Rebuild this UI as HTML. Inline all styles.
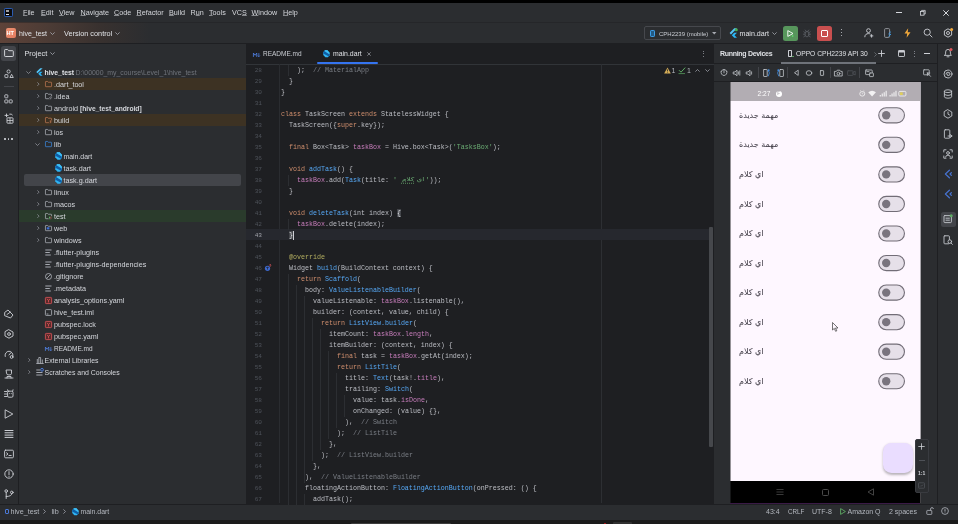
<!DOCTYPE html><html lang="en"><head><meta charset="utf-8"><title>hive_test - main.dart</title><style>
*{margin:0;padding:0;box-sizing:border-box}
html,body{width:958px;height:524px;overflow:hidden;background:#000}
body{position:relative;font-family:"Liberation Sans","DejaVu Sans",sans-serif;font-size:7px;color:#c9ccd2;line-height:1}
.a{position:absolute}
u{text-decoration-color:rgba(213,215,220,0.550);text-underline-offset:0.300px}
.t{position:absolute;white-space:nowrap;line-height:12px;height:12px}
.m{position:absolute;white-space:pre;font-family:"Liberation Mono","DejaVu Sans Mono",monospace;font-size:6.67px;line-height:11px;height:11px;color:#bcbec4}
.ln{position:absolute;font-family:"Liberation Mono",monospace;font-size:6.1px;line-height:11px;height:11px;color:#4e525a;width:16px;text-align:right;left:246px}
.k{color:#cf8e6d}.s{color:#6aab73}.f{color:#56a8f5}.p{color:#c77dbb}.c{color:#7a7e85}.an{color:#b3ae60}
svg{position:absolute;overflow:visible}
.g{position:absolute;width:1px;background:#2c2e32}
.row{position:absolute;left:19px;width:227px;height:12px}
.sw{position:absolute;width:27px;height:16px;border:1.100px solid #726d77;border-radius:8px;background:#e6e0e9}
.sw i{position:absolute;left:3.200px;top:2.800px;width:8.400px;height:8.400px;border-radius:50%;background:#79747e}
.ar{position:absolute;font-family:"DejaVu Sans","Liberation Sans",sans-serif;font-size:8px;color:#3a3640;white-space:nowrap;direction:rtl;line-height:12px;height:12px}
</style></head><body><div id="root" style="position:absolute;left:0;top:0;width:958px;height:524px;overflow:hidden;will-change:transform">
<div class="a" style="left:0;top:3px;width:958px;height:19px;background:#2b2d30"></div>
<div class="a" style="left:0;top:22px;width:958px;height:21px;background:linear-gradient(90deg,#5e4339 0,#4b3b35 50px,#38312f 100px,#2b2d30 150px)"></div>
<div class="a" style="left:0;top:43px;width:958px;height:1px;background:#1e1f22"></div>
<div class="a" style="left:0;top:22px;width:958px;height:1px;background:rgba(30,31,34,0.450)"></div>
<div class="a" style="left:0;top:44px;width:18px;height:461px;background:#2b2d30"></div>
<div class="a" style="left:18px;top:44px;width:1px;height:461px;background:#1e1f22"></div>
<div class="a" style="left:19px;top:44px;width:227px;height:461px;background:#2b2d30"></div>
<div class="a" style="left:246px;top:44px;width:468px;height:461px;background:#1e1f22"></div>
<div class="a" style="left:714px;top:44px;width:224px;height:461px;background:#2b2d30"></div>
<div class="a" style="left:937px;top:44px;width:1px;height:461px;background:#1e1f22"></div>
<div class="a" style="left:938px;top:44px;width:20px;height:461px;background:#2b2d30"></div>
<div class="a" style="left:0;top:504px;width:958px;height:16px;background:#2b2d30;border-top:1px solid #1e1f22"></div>
<div class="a" style="left:4px;top:8px;width:8.500px;height:9px;background:#0b0b0d;border:1px solid #2c5cb0;border-radius:1.200px"></div><div class="a" style="left:5.700px;top:9.800px;width:3px;height:2.500px;background:#c8c8c8;opacity:0.800"></div>
<div class="a" style="left:5.700px;top:14px;width:3px;height:1px;background:#e8e8e8"></div>
<div class="t" style="left:23px;top:7px;font-size:7.2px;color:#d5d7dc"><u>F</u>ile</div>
<div class="t" style="left:41px;top:7px;font-size:7.2px;color:#d5d7dc"><u>E</u>dit</div>
<div class="t" style="left:59px;top:7px;font-size:7.2px;color:#d5d7dc"><u>V</u>iew</div>
<div class="t" style="left:80.5px;top:7px;font-size:7.2px;color:#d5d7dc"><u>N</u>avigate</div>
<div class="t" style="left:114px;top:7px;font-size:7.2px;color:#d5d7dc"><u>C</u>ode</div>
<div class="t" style="left:136.5px;top:7px;font-size:7.2px;color:#d5d7dc"><u>R</u>efactor</div>
<div class="t" style="left:169px;top:7px;font-size:7.2px;color:#d5d7dc"><u>B</u>uild</div>
<div class="t" style="left:190.5px;top:7px;font-size:7.2px;color:#d5d7dc">R<u>u</u>n</div>
<div class="t" style="left:209px;top:7px;font-size:7.2px;color:#d5d7dc"><u>T</u>ools</div>
<div class="t" style="left:232px;top:7px;font-size:7.2px;color:#d5d7dc">VC<u>S</u></div>
<div class="t" style="left:251.5px;top:7px;font-size:7.2px;color:#d5d7dc"><u>W</u>indow</div>
<div class="t" style="left:283px;top:7px;font-size:7.2px;color:#d5d7dc"><u>H</u>elp</div>
<div class="a" style="left:896px;top:12px;width:6px;height:1px;background:#d5d7dc"></div>
<svg style="left:920px;top:9.800px" width="5.600" height="5.600" viewBox="0 0 7 7"><rect x="0.5" y="2" width="4.5" height="4.5" fill="none" stroke="#d5d7dc" stroke-width="1"/><path d="M2 2V0.5H6.5V5H5" fill="none" stroke="#d5d7dc" stroke-width="1"/></svg>
<svg style="left:943px;top:9.5px" width="6" height="6" viewBox="0 0 6 6"><path d="M0.3 0.3L5.7 5.7M5.7 0.3L0.3 5.7" stroke="#d5d7dc" stroke-width="1"/></svg>
<div class="a" style="left:5.5px;top:28px;width:10px;height:10px;border-radius:2px;background:linear-gradient(135deg,#ec9272,#e27a5e)"></div>
<div class="t" style="left:6.6px;top:27px;font-size:5.6px;font-weight:bold;color:#fff;letter-spacing:-0.2px">HT</div>
<div class="t" style="left:19px;top:27.5px;font-size:7px;color:#dfe1e5">hive_test</div>
<svg style="left:49.7px;top:31.8px" width="5" height="3" viewBox="0 0 5 3"><path d="M0.4 0.4L2.5 2.5L4.6 0.4" fill="none" stroke="#a8abb2" stroke-width="0.8"/></svg>
<div class="t" style="left:64px;top:27.5px;font-size:7.3px;color:#dfe1e5">Version control</div>
<svg style="left:114.5px;top:31.5px" width="5" height="3" viewBox="0 0 5 3"><path d="M0.4 0.4L2.5 2.5L4.6 0.4" fill="none" stroke="#a8abb2" stroke-width="0.8"/></svg>
<div class="a" style="left:644px;top:26px;width:77px;height:14px;border:1px solid #46484d;border-radius:2px"></div>
<div class="a" style="left:650px;top:29.500px;width:5px;height:7.500px;background:#235a84;border:1.100px solid #3d9ee8;border-radius:1.200px"></div>
<div class="t" style="left:659px;top:27.5px;font-size:6px;color:#c9ccd2">CPH2239 (mobile)</div>
<svg style="left:712px;top:32px" width="4.500" height="2.600" viewBox="0 0 5 3"><path d="M0 0H5L2.5 3Z" fill="#a8abb2"/></svg>
<svg style="left:728.5px;top:28px" width="9" height="10" viewBox="0 0 9 10"><path d="M5.2 0.3L0.6 5L2 6.4L8 0.3Z" fill="#54c5f8"/><path d="M5.2 4.8L2.8 7.2L5.2 9.7H8L5.5 7.2L8 4.8Z" fill="#29b6f6"/><circle cx="7.3" cy="1.7" r="1.5" fill="#4caf50"/></svg>
<div class="t" style="left:739.5px;top:27.5px;font-size:7.1px;color:#dfe1e5">main.dart</div>
<svg style="left:772px;top:31.5px" width="5" height="3" viewBox="0 0 5 3"><path d="M0.4 0.4L2.5 2.5L4.6 0.4" fill="none" stroke="#a8abb2" stroke-width="0.8"/></svg>
<div class="a" style="left:782.7px;top:25.5px;width:15px;height:15px;border-radius:2.5px;background:#57965c"></div>
<svg style="left:787.2px;top:29.5px" width="7" height="7" viewBox="0 0 7 7"><path d="M0.8 0.6L6 3.5L0.8 6.4Z" fill="none" stroke="#fff" stroke-width="0.9" stroke-linejoin="round"/><circle cx="5.6" cy="6" r="0.9" fill="#62d26f"/></svg>
<svg style="left:803.300px;top:28.500px" width="8" height="9" viewBox="0 0 8 9" fill="none" stroke="#5c5f66" stroke-width="0.800" stroke-linecap="round"><ellipse cx="4" cy="5.200" rx="2" ry="2.700"/><path d="M2.600 2.800Q4 1.200 5.400 2.800"/><path d="M2.200 1L2.900 1.900M5.800 1L5.100 1.900M0.400 5.200H2M6 5.200H7.600M0.800 2.800L2.200 3.800M7.200 2.800L5.800 3.800M0.800 7.800L2.200 6.800M7.200 7.800L5.800 6.800"/></svg>
<div class="a" style="left:817px;top:25.5px;width:15px;height:15px;border-radius:2.5px;background:#c94f4f"></div>
<div class="a" style="left:821px;top:29.5px;width:7px;height:7px;border:1px solid #fff;border-radius:1px"></div>
<div class="a" style="left:840.5px;top:29.3px;width:1.2px;height:1.2px;background:#ced0d6;border-radius:50%"></div>
<div class="a" style="left:840.5px;top:32.3px;width:1.2px;height:1.2px;background:#ced0d6;border-radius:50%"></div>
<div class="a" style="left:840.5px;top:35.3px;width:1.2px;height:1.2px;background:#ced0d6;border-radius:50%"></div>
<svg style="left:864px;top:28px" width="10" height="10" viewBox="0 0 10 10"><circle cx="4.5" cy="2.6" r="1.9" fill="none" stroke="#ced0d6" stroke-width="0.9"/><path d="M0.8 9.2C0.8 6.8 2.3 5.6 4.5 5.6C5.3 5.6 6 5.8 6.4 6.1" fill="none" stroke="#ced0d6" stroke-width="0.9"/><path d="M7.6 6.2V9.6M5.9 7.9H9.3" stroke="#ced0d6" stroke-width="0.9"/></svg>
<svg style="left:884px;top:28px" width="8" height="10" viewBox="0 0 8 10"><rect x="0.6" y="0.6" width="5" height="8.8" rx="1" fill="none" stroke="#9a9da3" stroke-width="0.9"/><path d="M4.5 6L6.8 3.8M4.5 8.4L6.8 6.2L5.6 7.2" stroke="#3d9ee8" stroke-width="1"/></svg>
<svg style="left:904px;top:28px" width="7" height="10" viewBox="0 0 7 10"><path d="M4.2 0.2L0.5 5.6H3.2L2.6 9.8L6.5 4.2H3.7Z" fill="#f2a93b"/></svg>
<svg style="left:923px;top:28px" width="10" height="10" viewBox="0 0 10 10"><circle cx="4.2" cy="4.2" r="3.1" fill="none" stroke="#ced0d6" stroke-width="0.9"/><path d="M6.5 6.5L9.3 9.3" stroke="#ced0d6" stroke-width="0.9"/></svg>
<svg style="left:943px;top:28px" width="10" height="10" viewBox="0 0 10 10"><path d="M5 0.8L8.6 2.9V7.1L5 9.2L1.4 7.100V2.9Z" fill="none" stroke="#ced0d6" stroke-width="0.9" stroke-linejoin="round"/><circle cx="5" cy="5" r="1.5" fill="none" stroke="#ced0d6" stroke-width="0.9"/><circle cx="8.6" cy="1.6" r="1.5" fill="#f2a93b"/></svg>
<div class="a" style="left:1px;top:45.500px;width:14.500px;height:15px;border-radius:2.5px;background:#43454a"></div>
<svg style="left:4px;top:49px" width="10" height="8" viewBox="0 0 10 8"><path d="M0.6 1.2Q0.6 0.5 1.3 0.5H3.6L4.8 1.7H8.6Q9.3 1.7 9.3 2.4V6.8Q9.3 7.5 8.600 7.500H1.3Q0.6 7.5 0.6 6.8Z" fill="none" stroke="#dfe1e5" stroke-width="0.9"/></svg>
<svg style="left:4px;top:69px" width="10" height="10" viewBox="0 0 10 10" fill="none" stroke="#ced0d6" stroke-width="0.85"><circle cx="4.600" cy="2.500" r="1.600"/><rect x="0.900" y="5.600" width="3" height="3" rx="0.400"/><path d="M7.600 5.300L9.300 8.500H5.900Z" stroke-linejoin="round"/></svg>
<div class="a" style="left:4px;top:86px;width:10px;height:1px;background:#43454a"></div>
<svg style="left:4px;top:94px" width="10" height="10" viewBox="0 0 10 10"><rect x="0.8" y="0.8" width="3" height="3" rx="0.500" fill="none" stroke="#ced0d6" stroke-width="0.85"/><rect x="0.8" y="5.900" width="3" height="3" rx="0.500" fill="none" stroke="#ced0d6" stroke-width="0.85"/><rect x="5.200" y="5.900" width="3" height="3" rx="0.500" fill="none" stroke="#ced0d6" stroke-width="0.85"/></svg>
<svg style="left:4px;top:113px" width="10" height="11" viewBox="0 0 10 11"><path d="M0.6 2.4H4.5M2.5 0.6V4.2M5.3 1.2Q7.5 0.6 8.6 2.2" fill="none" stroke="#ced0d6" stroke-width="0.9"/><rect x="3" y="4.8" width="6" height="5.4" rx="0.6" fill="none" stroke="#ced0d6" stroke-width="0.9"/><path d="M3 7.500H9M6 4.8V10.2" stroke="#ced0d6" stroke-width="0.8"/></svg>
<div class="a" style="left:4.2px;top:138.3px;width:1.4px;height:1.4px;border-radius:50%;background:#ced0d6"></div>
<div class="a" style="left:7.7px;top:138.3px;width:1.4px;height:1.4px;border-radius:50%;background:#ced0d6"></div>
<div class="a" style="left:11.2px;top:138.3px;width:1.4px;height:1.4px;border-radius:50%;background:#ced0d6"></div>
<svg style="left:4px;top:309px" width="10" height="10" viewBox="0 0 10 10" fill="none" stroke="#ced0d6" stroke-width="0.9" stroke-linejoin="round" stroke-linecap="round"><path d="M1 3.2L4 1L9 6L6.5 9L1 6.800Z"/><path d="M3 5.500L6.500 3"/></svg>
<svg style="left:4px;top:329px" width="10" height="10" viewBox="0 0 10 10" fill="none" stroke="#ced0d6" stroke-width="0.9" stroke-linejoin="round" stroke-linecap="round"><path d="M5 0.8L9 3V7L5 9.2L1 7V3Z"/><circle cx="5" cy="5" r="1.4"/></svg>
<svg style="left:4px;top:349px" width="10" height="10" viewBox="0 0 10 10" fill="none" stroke="#ced0d6" stroke-width="0.9" stroke-linejoin="round" stroke-linecap="round"><path d="M1.2 7.500A4 4 0 1 1 8.800 7.500"/><path d="M5 6L7 3.600"/><circle cx="7.600" cy="8" r="1.4"/></svg>
<svg style="left:4px;top:369px" width="10" height="10" viewBox="0 0 10 10" fill="none" stroke="#ced0d6" stroke-width="0.9" stroke-linejoin="round" stroke-linecap="round"><path d="M2.500 1H7.500V4.500Q7.500 6 5 6Q2.500 6 2.500 4.500Z"/><path d="M1 9H9M3 9V7.500H7V9"/></svg>
<svg style="left:4px;top:389px" width="10" height="10" viewBox="0 0 10 10" fill="none" stroke="#ced0d6" stroke-width="0.9" stroke-linejoin="round" stroke-linecap="round"><path d="M0.5 2.500H3M0.500 5H3M0.500 7.500H3"/><rect x="3.6" y="2.2" width="5.400" height="6" rx="1.200"/><path d="M4 2.200L3.600 0.800M8.600 2.200L9 0.800M5.300 4.600H5.400M7.200 4.600H7.300"/></svg>
<svg style="left:4px;top:409px" width="10" height="10" viewBox="0 0 10 10" fill="none" stroke="#ced0d6" stroke-width="0.9" stroke-linejoin="round" stroke-linecap="round"><path d="M1.500 1L8.800 5L1.500 9Z"/></svg>
<svg style="left:4px;top:429px" width="10" height="10" viewBox="0 0 10 10" fill="none" stroke="#ced0d6" stroke-width="0.9" stroke-linejoin="round" stroke-linecap="round"><path d="M1 1.500H9M1 3.800H9M1 6.100H9M1 8.400H9" stroke-width="1"/></svg>
<svg style="left:4px;top:449px" width="10" height="10" viewBox="0 0 10 10" fill="none" stroke="#ced0d6" stroke-width="0.9" stroke-linejoin="round" stroke-linecap="round"><rect x="0.600" y="1.200" width="8.800" height="7.600" rx="1"/><path d="M2.500 3.800L4 5L2.500 6.200M5 6.500H7.200"/></svg>
<svg style="left:4px;top:469px" width="10" height="10" viewBox="0 0 10 10" fill="none" stroke="#ced0d6" stroke-width="0.9" stroke-linejoin="round" stroke-linecap="round"><circle cx="5" cy="5" r="4.200"/><path d="M5 2.600V5.600M5 7.200V7.400"/></svg>
<svg style="left:4px;top:488.7px" width="10" height="10" viewBox="0 0 10 10" fill="none" stroke="#ced0d6" stroke-width="0.9" stroke-linejoin="round" stroke-linecap="round"><circle cx="2.200" cy="2" r="1.300"/><circle cx="7.800" cy="3.400" r="1.300"/><path d="M2.200 3.300V9.500M2.200 7.500Q7.800 7.500 7.800 4.700"/></svg>
<div class="t" style="left:24.5px;top:48px;font-size:7.3px;color:#dfe1e5">Project</div>
<svg style="left:49.500px;top:52px" width="5" height="3" viewBox="0 0 5 3"><path d="M0.4 0.4L2.5 2.5L4.6 0.4" fill="none" stroke="#a8abb2" stroke-width="0.8"/></svg>
<svg style="left:26px;top:70.8px" width="5" height="3" viewBox="0 0 5 3"><path d="M0.4 0.4L2.500 2.500L4.600 0.4" fill="none" stroke="#8f929a" stroke-width="0.8"/></svg>
<svg style="left:36px;top:68px" width="7" height="8" viewBox="0 0 7 8"><path d="M4.200 0.200L0.300 4.100L1.500 5.300L6.600 0.200Z" fill="#54c5f8"/><path d="M4.200 3.700L2.200 5.700L4.200 7.800H6.600L4.500 5.700L6.600 3.700Z" fill="#29b6f6"/></svg>
<div class="t" style="left:44.5px;top:66.5px;font-size:7.200px;color:#d5d7dc;font-weight:bold;font-size:6.800px;color:#dfe1e5">hive_test</div>
<div class="t" style="left:75.500px;top:66.5px;font-size:6.900px;color:#6f737a">D:\00000_my_course\Level_1\hive_test</div>
<div class="row" style="top:78px;background:#3d3223"></div>
<svg style="left:36.7px;top:81.9px" width="2.500" height="4.200" viewBox="0 0 3 5"><path d="M0.4 0.4L2.500 2.500L0.4 4.600" fill="none" stroke="#8f929a" stroke-width="0.9"/></svg>
<svg style="left:45px;top:81px" width="7" height="6.125" viewBox="0 0 8 7"><path d="M0.500 1Q0.500 0.500 1 0.500H2.800L3.700 1.400H7Q7.500 1.400 7.500 1.900V6Q7.500 6.500 7 6.500H1Q0.500 6.500 0.500 6Z" fill="none" stroke="#c77d55" stroke-width="0.8"/></svg>
<div class="t" style="left:54px;top:78.5px;font-size:7.200px;color:#d5d7dc">.dart_tool</div>
<svg style="left:36.7px;top:93.9px" width="2.500" height="4.200" viewBox="0 0 3 5"><path d="M0.4 0.4L2.500 2.500L0.4 4.600" fill="none" stroke="#8f929a" stroke-width="0.9"/></svg>
<svg style="left:45px;top:93px" width="7" height="6.125" viewBox="0 0 8 7"><path d="M0.500 1Q0.500 0.500 1 0.500H2.800L3.700 1.400H7Q7.500 1.400 7.500 1.900V6Q7.500 6.500 7 6.500H1Q0.500 6.500 0.500 6Z" fill="none" stroke="#b4b8bf" stroke-width="0.8"/><rect x="4.500" y="3.800" width="3.500" height="3.200" fill="#2b2d30"/><circle cx="6.300" cy="5.400" r="1" fill="none" stroke="#b4b8bf" stroke-width="0.600"/></svg>
<div class="t" style="left:54px;top:90.5px;font-size:7.200px;color:#d5d7dc">.idea</div>
<svg style="left:36.7px;top:105.9px" width="2.500" height="4.200" viewBox="0 0 3 5"><path d="M0.4 0.4L2.500 2.500L0.4 4.600" fill="none" stroke="#8f929a" stroke-width="0.9"/></svg>
<svg style="left:45px;top:105px" width="7" height="6.125" viewBox="0 0 8 7"><path d="M0.500 1Q0.500 0.500 1 0.500H2.800L3.700 1.400H7Q7.500 1.400 7.500 1.900V6Q7.500 6.500 7 6.500H1Q0.500 6.500 0.500 6Z" fill="none" stroke="#b4b8bf" stroke-width="0.8"/></svg>
<div class="t" style="left:54px;top:102.5px;font-size:7.200px;color:#d5d7dc">android</div>
<div class="t" style="left:80px;top:102.5px;font-size:6.700px;font-weight:bold;color:#d5d7dc">[hive_test_android]</div>
<div class="row" style="top:114px;background:#3d3223"></div>
<svg style="left:36.7px;top:117.9px" width="2.500" height="4.200" viewBox="0 0 3 5"><path d="M0.4 0.4L2.500 2.500L0.4 4.600" fill="none" stroke="#8f929a" stroke-width="0.9"/></svg>
<svg style="left:45px;top:117px" width="7" height="6.125" viewBox="0 0 8 7"><path d="M0.500 1Q0.500 0.500 1 0.500H2.800L3.700 1.400H7Q7.500 1.400 7.500 1.900V6Q7.500 6.500 7 6.500H1Q0.500 6.500 0.500 6Z" fill="none" stroke="#c77d55" stroke-width="0.8"/><rect x="4.500" y="3.800" width="3.500" height="3.200" fill="#3d3223"/><path d="M5.200 4.500H7.500M5.200 5.800H7.500M6.300 4V6.800" stroke="#c77d55" stroke-width="0.600"/></svg>
<div class="t" style="left:54px;top:114.5px;font-size:7.200px;color:#d5d7dc">build</div>
<svg style="left:36.7px;top:129.9px" width="2.500" height="4.200" viewBox="0 0 3 5"><path d="M0.4 0.4L2.500 2.500L0.4 4.600" fill="none" stroke="#8f929a" stroke-width="0.9"/></svg>
<svg style="left:45px;top:129px" width="7" height="6.125" viewBox="0 0 8 7"><path d="M0.500 1Q0.500 0.500 1 0.500H2.800L3.700 1.400H7Q7.500 1.400 7.500 1.900V6Q7.500 6.500 7 6.500H1Q0.500 6.500 0.500 6Z" fill="none" stroke="#b4b8bf" stroke-width="0.8"/></svg>
<div class="t" style="left:54px;top:126.5px;font-size:7.200px;color:#d5d7dc">ios</div>
<svg style="left:35.2px;top:142.8px" width="5" height="3" viewBox="0 0 5 3"><path d="M0.4 0.4L2.500 2.500L4.600 0.4" fill="none" stroke="#8f929a" stroke-width="0.8"/></svg>
<svg style="left:45px;top:141px" width="7" height="6.125" viewBox="0 0 8 7"><path d="M0.500 1Q0.500 0.500 1 0.500H2.800L3.700 1.400H7Q7.500 1.400 7.500 1.900V6Q7.500 6.500 7 6.500H1Q0.500 6.500 0.500 6Z" fill="none" stroke="#3d8ee8" stroke-width="0.8"/></svg>
<div class="t" style="left:54px;top:138.5px;font-size:7.200px;color:#d5d7dc">lib</div>
<svg style="left:54.7px;top:152.2px" width="7.200" height="8" viewBox="0 0 8 8" preserveAspectRatio="none"><path d="M2.300 0.300H5.200L7.700 2.800V5.800L5.800 7.700H2.800L0.300 5.200V2.300Z" fill="#2fb4f3"/><path d="M0.300 2.600L1.500 1.100L7.300 4.600L7.700 5.800L6.800 6.800L0.300 3.800Z" fill="#0f5ea6"/><path d="M2.300 0.300H5.200L7.700 2.800V4.300L1.700 0.900Z" fill="#3fc0f7"/></svg>
<div class="t" style="left:63.5px;top:150.5px;font-size:7.200px;color:#d5d7dc;font-size:6.900px">main.dart</div>
<svg style="left:54.7px;top:164.2px" width="7.200" height="8" viewBox="0 0 8 8" preserveAspectRatio="none"><path d="M2.300 0.300H5.200L7.700 2.800V5.800L5.800 7.700H2.800L0.300 5.200V2.300Z" fill="#2fb4f3"/><path d="M0.300 2.600L1.500 1.100L7.300 4.600L7.700 5.800L6.800 6.800L0.300 3.800Z" fill="#0f5ea6"/><path d="M2.300 0.300H5.200L7.700 2.800V4.300L1.700 0.900Z" fill="#3fc0f7"/></svg>
<div class="t" style="left:63.5px;top:162.5px;font-size:7.200px;color:#d5d7dc">task.dart</div>
<div class="a" style="left:24px;top:174px;width:217px;height:12px;border-radius:2px;background:#43454a"></div>
<svg style="left:54.7px;top:176.2px" width="7.200" height="8" viewBox="0 0 8 8" preserveAspectRatio="none"><path d="M2.300 0.300H5.200L7.700 2.800V5.800L5.800 7.700H2.800L0.300 5.200V2.300Z" fill="#2fb4f3"/><path d="M0.300 2.600L1.500 1.100L7.300 4.600L7.700 5.800L6.800 6.800L0.300 3.800Z" fill="#0f5ea6"/><path d="M2.300 0.300H5.200L7.700 2.800V4.300L1.700 0.900Z" fill="#3fc0f7"/></svg>
<div class="t" style="left:63.5px;top:174.5px;font-size:7.200px;color:#d5d7dc">task.g.dart</div>
<svg style="left:36.7px;top:189.9px" width="2.500" height="4.200" viewBox="0 0 3 5"><path d="M0.4 0.4L2.500 2.500L0.4 4.600" fill="none" stroke="#8f929a" stroke-width="0.9"/></svg>
<svg style="left:45px;top:189px" width="7" height="6.125" viewBox="0 0 8 7"><path d="M0.500 1Q0.500 0.500 1 0.500H2.800L3.700 1.400H7Q7.500 1.400 7.500 1.900V6Q7.500 6.500 7 6.500H1Q0.500 6.500 0.500 6Z" fill="none" stroke="#b4b8bf" stroke-width="0.8"/></svg>
<div class="t" style="left:54px;top:186.5px;font-size:7.200px;color:#d5d7dc">linux</div>
<svg style="left:36.7px;top:201.9px" width="2.500" height="4.200" viewBox="0 0 3 5"><path d="M0.4 0.4L2.500 2.500L0.4 4.600" fill="none" stroke="#8f929a" stroke-width="0.9"/></svg>
<svg style="left:45px;top:201px" width="7" height="6.125" viewBox="0 0 8 7"><path d="M0.500 1Q0.500 0.500 1 0.500H2.800L3.700 1.400H7Q7.500 1.400 7.500 1.900V6Q7.500 6.500 7 6.500H1Q0.500 6.500 0.500 6Z" fill="none" stroke="#b4b8bf" stroke-width="0.8"/></svg>
<div class="t" style="left:54px;top:198.5px;font-size:7.200px;color:#d5d7dc">macos</div>
<div class="row" style="top:210px;background:#2a3b2c"></div>
<svg style="left:36.7px;top:213.9px" width="2.500" height="4.200" viewBox="0 0 3 5"><path d="M0.4 0.4L2.500 2.500L0.4 4.600" fill="none" stroke="#8f929a" stroke-width="0.9"/></svg>
<svg style="left:45px;top:213px" width="7" height="6.125" viewBox="0 0 8 7"><path d="M0.500 1Q0.500 0.500 1 0.500H2.800L3.700 1.400H7Q7.500 1.400 7.500 1.900V6Q7.500 6.500 7 6.500H1Q0.500 6.500 0.500 6Z" fill="none" stroke="#b4b8bf" stroke-width="0.8"/><rect x="4" y="3.600" width="4" height="3.400" fill="#2a3b2c"/><path d="M4.600 3.800L6.400 5.300L4.600 6.800Z" fill="#5fad65"/><path d="M6.800 4V6.800" stroke="#e0565b" stroke-width="0.700"/></svg>
<div class="t" style="left:54px;top:210.5px;font-size:7.200px;color:#d5d7dc">test</div>
<svg style="left:36.7px;top:225.9px" width="2.500" height="4.200" viewBox="0 0 3 5"><path d="M0.4 0.4L2.500 2.500L0.4 4.600" fill="none" stroke="#8f929a" stroke-width="0.9"/></svg>
<svg style="left:45px;top:225px" width="7" height="6.125" viewBox="0 0 8 7"><path d="M0.500 1Q0.500 0.500 1 0.500H2.800L3.700 1.400H7Q7.500 1.400 7.500 1.900V6Q7.500 6.500 7 6.500H1Q0.500 6.500 0.500 6Z" fill="none" stroke="#b4b8bf" stroke-width="0.8"/><rect x="2" y="2.600" width="3" height="2.400" fill="#3d6fd6"/></svg>
<div class="t" style="left:54px;top:222.5px;font-size:7.200px;color:#d5d7dc">web</div>
<svg style="left:36.7px;top:237.9px" width="2.500" height="4.200" viewBox="0 0 3 5"><path d="M0.4 0.4L2.500 2.500L0.4 4.600" fill="none" stroke="#8f929a" stroke-width="0.9"/></svg>
<svg style="left:45px;top:237px" width="7" height="6.125" viewBox="0 0 8 7"><path d="M0.500 1Q0.500 0.500 1 0.500H2.800L3.700 1.400H7Q7.500 1.400 7.500 1.900V6Q7.500 6.500 7 6.500H1Q0.500 6.500 0.500 6Z" fill="none" stroke="#b4b8bf" stroke-width="0.8"/></svg>
<div class="t" style="left:54px;top:234.5px;font-size:7.200px;color:#d5d7dc">windows</div>
<svg style="left:45px;top:249px" width="7" height="7" viewBox="0 0 7 7"><path d="M0.300 1H6.500M0.300 3.500H4.800M0.300 6H5.800" stroke="#b4b8bf" stroke-width="0.9"/></svg>
<div class="t" style="left:54px;top:246.5px;font-size:7.200px;color:#d5d7dc">.flutter-plugins</div>
<svg style="left:45px;top:261px" width="7" height="7" viewBox="0 0 7 7"><path d="M0.300 1H6.500M0.300 3.500H4.800M0.300 6H5.800" stroke="#b4b8bf" stroke-width="0.9"/></svg>
<div class="t" style="left:54px;top:258.5px;font-size:7.200px;color:#d5d7dc">.flutter-plugins-dependencies</div>
<svg style="left:45.3px;top:273px" width="7" height="7" viewBox="0 0 7 7"><circle cx="3.500" cy="3.500" r="3" fill="none" stroke="#b4b8bf" stroke-width="0.8"/><path d="M1.400 5.600L5.600 1.400" stroke="#b4b8bf" stroke-width="0.8"/></svg>
<div class="t" style="left:54px;top:270.5px;font-size:7.200px;color:#d5d7dc">.gitignore</div>
<svg style="left:45px;top:285px" width="7" height="7" viewBox="0 0 7 7"><path d="M0.300 1H6.500M0.300 3.500H4.800M0.300 6H5.800" stroke="#b4b8bf" stroke-width="0.9"/></svg>
<div class="t" style="left:54px;top:282.5px;font-size:7.200px;color:#d5d7dc">.metadata</div>
<svg style="left:45.3px;top:297px" width="7" height="7" viewBox="0 0 7 7"><rect x="0.400" y="0.400" width="6.200" height="6.200" rx="0.800" fill="#5a2a2a" stroke="#e0565b" stroke-width="0.8"/><path d="M2 1.800L3.500 3.600L5 1.800M3.500 3.600V5.400" fill="none" stroke="#e0565b" stroke-width="0.8"/></svg>
<div class="t" style="left:54px;top:294.5px;font-size:7.200px;color:#d5d7dc">analysis_options.yaml</div>
<svg style="left:45.3px;top:309px" width="7" height="7" viewBox="0 0 7 7"><rect x="0.400" y="0.600" width="6.200" height="5.800" rx="0.800" fill="none" stroke="#b4b8bf" stroke-width="0.8"/><path d="M1.600 5H3.400" stroke="#b4b8bf" stroke-width="0.8"/></svg>
<div class="t" style="left:54px;top:306.5px;font-size:7.200px;color:#d5d7dc">hive_test.iml</div>
<svg style="left:45.3px;top:321px" width="7" height="7" viewBox="0 0 7 7"><rect x="0.400" y="0.400" width="6.200" height="6.200" rx="0.800" fill="#5a2a2a" stroke="#e0565b" stroke-width="0.8"/><path d="M2 1.800L3.500 3.600L5 1.800M3.500 3.600V5.400" fill="none" stroke="#e0565b" stroke-width="0.8"/></svg>
<div class="t" style="left:54px;top:318.5px;font-size:7.200px;color:#d5d7dc">pubspec.lock</div>
<svg style="left:45.3px;top:333px" width="7" height="7" viewBox="0 0 7 7"><rect x="0.400" y="0.400" width="6.200" height="6.200" rx="0.800" fill="#5a2a2a" stroke="#e0565b" stroke-width="0.8"/><path d="M2 1.800L3.500 3.600L5 1.800M3.500 3.600V5.400" fill="none" stroke="#e0565b" stroke-width="0.8"/></svg>
<div class="t" style="left:54px;top:330.5px;font-size:7.200px;color:#d5d7dc">pubspec.yaml</div>
<svg style="left:45px;top:345.5px" width="7.500" height="6" viewBox="0 0 9 7"><path d="M0.500 5.800V1.200L2.500 3.800L4.500 1.200V5.800" fill="none" stroke="#548af7" stroke-width="0.900"/><path d="M7 1.200V5.400M5.800 4.200L7 5.600L8.200 4.200" fill="none" stroke="#548af7" stroke-width="0.800"/></svg>
<div class="t" style="left:54px;top:342.5px;font-size:7.200px;color:#d5d7dc;font-size:6.500px">README.md</div>
<svg style="left:27.5px;top:357.9px" width="2.500" height="4.200" viewBox="0 0 3 5"><path d="M0.4 0.4L2.500 2.500L0.4 4.600" fill="none" stroke="#8f929a" stroke-width="0.9"/></svg>
<svg style="left:36px;top:357px" width="8" height="7" viewBox="0 0 8 7"><path d="M0.300 6.500H7.700M1.300 6.500V2M2.800 6.500V0.500H4.600V6.500M6.300 6.500V2.500" fill="none" stroke="#b4b8bf" stroke-width="0.8"/></svg>
<div class="t" style="left:44.5px;top:354.5px;font-size:7.200px;color:#d5d7dc;font-size:6.950px">External Libraries</div>
<svg style="left:27.5px;top:369.9px" width="2.500" height="4.200" viewBox="0 0 3 5"><path d="M0.4 0.4L2.500 2.500L0.4 4.600" fill="none" stroke="#8f929a" stroke-width="0.9"/></svg>
<svg style="left:36px;top:367.5px" width="8" height="8" viewBox="0 0 8 8"><path d="M0.300 2H4M0.300 4.500H6.500M0.300 7H6.500" stroke="#b4b8bf" stroke-width="0.9"/><circle cx="6" cy="1.800" r="1.400" fill="#2b2d30" stroke="#548af7" stroke-width="0.8"/></svg>
<div class="t" style="left:44.5px;top:366.5px;font-size:7.200px;color:#d5d7dc;font-size:6.950px">Scratches and Consoles</div>
<div class="a" style="left:246px;top:63.500px;width:468px;height:1px;background:#313438"></div>
<svg style="left:253px;top:51.500px" width="7.500" height="6" viewBox="0 0 9 7"><path d="M0.500 5.800V1.200L2.500 3.800L4.500 1.200V5.800" fill="none" stroke="#548af7" stroke-width="0.900"/><path d="M7 1.200V5.400M5.800 4.200L7 5.600L8.200 4.200" fill="none" stroke="#548af7" stroke-width="0.800"/></svg>
<div class="t" style="left:263px;top:48px;font-size:6.500px;color:#c9ccd2">README.md</div>
<svg style="left:323.300px;top:50px" width="6.800" height="7.600" viewBox="0 0 8 8" preserveAspectRatio="none"><path d="M2.300 0.300H5.200L7.700 2.800V5.800L5.800 7.700H2.800L0.300 5.200V2.300Z" fill="#2fb4f3"/><path d="M0.300 2.600L1.500 1.100L7.300 4.600L7.700 5.800L6.800 6.800L0.300 3.800Z" fill="#0f5ea6"/><path d="M2.300 0.300H5.200L7.700 2.800V4.300L1.700 0.900Z" fill="#3fc0f7"/></svg>
<div class="t" style="left:333px;top:48px;font-size:6.900px;color:#dfe1e5">main.dart</div>
<svg style="left:367px;top:51.500px" width="4" height="4" viewBox="0 0 4 4"><path d="M0.300 0.300L3.700 3.700M3.700 0.300L0.300 3.700" stroke="#9da0a8" stroke-width="0.700"/></svg>
<div class="a" style="left:316.500px;top:61.500px;width:61px;height:2px;background:#3574f0;border-radius:1px"></div>
<div class="a" style="left:703px;top:50.8px;width:1.200px;height:1.200px;background:#9da0a8;border-radius:50%"></div>
<div class="a" style="left:703px;top:53.3px;width:1.200px;height:1.200px;background:#9da0a8;border-radius:50%"></div>
<div class="a" style="left:703px;top:55.8px;width:1.200px;height:1.200px;background:#9da0a8;border-radius:50%"></div>
<div class="a" style="left:279px;top:64px;width:1px;height:439px;background:#2a2c30"></div>
<div class="a" style="left:601px;top:64px;width:1px;height:439px;background:#2d2f33"></div>
<div class="a" style="left:246px;top:229.0px;width:467px;height:11px;background:#26282e"></div>
<div class="g" style="left:288px;top:64.85px;height:11.0px"></div>
<div class="g" style="left:288px;top:174.85px;height:11.0px"></div>
<div class="g" style="left:288px;top:218.85px;height:11.0px"></div>
<div class="g" style="left:288px;top:273.85px;height:231.0px"></div>
<div class="g" style="left:296px;top:284.85px;height:220.0px"></div>
<div class="g" style="left:304px;top:295.85px;height:187.0px"></div>
<div class="g" style="left:304px;top:493.85px;height:11.0px"></div>
<div class="g" style="left:312px;top:317.85px;height:143.0px"></div>
<div class="g" style="left:320px;top:328.85px;height:121.0px"></div>
<div class="g" style="left:328px;top:350.85px;height:88.0px"></div>
<div class="g" style="left:336px;top:372.85px;height:55.0px"></div>
<div class="g" style="left:344px;top:394.85px;height:22.0px"></div>
<div class="ln" style="top:64.85px">28</div>
<div class="m" style="left:297px;top:64.85px">);<span class="c">  // MaterialApp</span></div>
<div class="ln" style="top:75.85px">29</div>
<div class="m" style="left:289px;top:75.85px">}</div>
<div class="ln" style="top:86.85px">30</div>
<div class="m" style="left:281px;top:86.85px">}</div>
<div class="ln" style="top:97.85px">31</div>
<div class="ln" style="top:108.85px">32</div>
<div class="m" style="left:281px;top:108.85px"><span class="k">class</span> TaskScreen <span class="k">extends</span> StatelessWidget {</div>
<div class="ln" style="top:119.85px">33</div>
<div class="m" style="left:289px;top:119.85px">TaskScreen({<span class="k">super</span>.key});</div>
<div class="ln" style="top:130.85px">34</div>
<div class="ln" style="top:141.85px">35</div>
<div class="m" style="left:289px;top:141.85px"><span class="k">final</span> Box&lt;Task&gt; <span class="p">taskBox</span> = Hive.box&lt;Task&gt;(<span class="s">'TasksBox'</span>);</div>
<div class="ln" style="top:152.85px">36</div>
<div class="ln" style="top:163.85px">37</div>
<div class="m" style="left:289px;top:163.85px"><span class="k">void</span> <span class="f">addTask</span>() {</div>
<div class="ln" style="top:174.85px">38</div>
<div class="m" style="left:297px;top:174.85px"><span class="p">taskBox</span>.add(<span class="f">Task</span>(title: <span class="s">' </span><span class="s" dir="rtl" style="display:inline-block;width:24.500px;line-height:0;text-align:center;font-family:'DejaVu Sans',sans-serif;font-size:7.300px;transform:scaleY(0.720);transform-origin:50% 68%">اي <span style="text-decoration:underline dotted #5d8f63 0.600px;text-underline-offset:0.300px">كلام</span></span><span class="s">'</span>));</div>
<div class="ln" style="top:185.85px">39</div>
<div class="m" style="left:289px;top:185.85px">}</div>
<div class="ln" style="top:196.85px">40</div>
<div class="ln" style="top:207.85px">41</div>
<div class="m" style="left:289px;top:207.85px"><span class="k">void</span> <span class="f">deleteTask</span>(int index) <span style="background:#43454a;color:#dfe1e5">{</span></div>
<div class="ln" style="top:218.85px">42</div>
<div class="m" style="left:297px;top:218.85px"><span class="p">taskBox</span>.delete(index);</div>
<div class="ln" style="top:229.85px;color:#a1a3ab">43</div>
<div class="m" style="left:289px;top:229.85px"><span style="background:#43454a;color:#dfe1e5">}</span></div>
<div class="ln" style="top:240.85px">44</div>
<div class="ln" style="top:251.85px">45</div>
<div class="m" style="left:289px;top:251.85px"><span class="an">@override</span></div>
<div class="ln" style="top:262.85px">46</div>
<div class="m" style="left:289px;top:262.85px">Widget <span class="f">build</span>(BuildContext context) {</div>
<div class="ln" style="top:273.85px">47</div>
<div class="m" style="left:297px;top:273.85px"><span class="k">return</span> <span class="f">Scaffold</span>(</div>
<div class="ln" style="top:284.85px">48</div>
<div class="m" style="left:305px;top:284.85px">body: <span class="f">ValueListenableBuilder</span>(</div>
<div class="ln" style="top:295.85px">49</div>
<div class="m" style="left:313px;top:295.85px">valueListenable: <span class="p">taskBox</span>.listenable(),</div>
<div class="ln" style="top:306.85px">50</div>
<div class="m" style="left:313px;top:306.85px">builder: (context, value, child) {</div>
<div class="ln" style="top:317.85px">51</div>
<div class="m" style="left:321px;top:317.85px"><span class="k">return</span> <span class="f">ListView.builder</span>(</div>
<div class="ln" style="top:328.85px">52</div>
<div class="m" style="left:329px;top:328.85px">itemCount: <span class="p">taskBox</span>.<span class="p">length</span>,</div>
<div class="ln" style="top:339.85px">53</div>
<div class="m" style="left:329px;top:339.85px">itemBuilder: (context, index) {</div>
<div class="ln" style="top:350.85px">54</div>
<div class="m" style="left:337px;top:350.85px"><span class="k">final</span> task = <span class="p">taskBox</span>.getAt(index);</div>
<div class="ln" style="top:361.85px">55</div>
<div class="m" style="left:337px;top:361.85px"><span class="k">return</span> <span class="f">ListTile</span>(</div>
<div class="ln" style="top:372.85px">56</div>
<div class="m" style="left:345px;top:372.85px">title: <span class="f">Text</span>(task!.<span class="p">title</span>),</div>
<div class="ln" style="top:383.85px">57</div>
<div class="m" style="left:345px;top:383.85px">trailing: <span class="f">Switch</span>(</div>
<div class="ln" style="top:394.85px">58</div>
<div class="m" style="left:353px;top:394.85px">value: task.<span class="p">isDone</span>,</div>
<div class="ln" style="top:405.85px">59</div>
<div class="m" style="left:353px;top:405.85px">onChanged: (value) {},</div>
<div class="ln" style="top:416.85px">60</div>
<div class="m" style="left:345px;top:416.85px">),<span class="c">  // Switch</span></div>
<div class="ln" style="top:427.85px">61</div>
<div class="m" style="left:337px;top:427.85px">);<span class="c">  // ListTile</span></div>
<div class="ln" style="top:438.85px">62</div>
<div class="m" style="left:329px;top:438.85px">},</div>
<div class="ln" style="top:449.85px">63</div>
<div class="m" style="left:321px;top:449.85px">);<span class="c">  // ListView.builder</span></div>
<div class="ln" style="top:460.85px">64</div>
<div class="m" style="left:313px;top:460.85px">},</div>
<div class="ln" style="top:471.85px">65</div>
<div class="m" style="left:305px;top:471.85px">),<span class="c">  // ValueListenableBuilder</span></div>
<div class="ln" style="top:482.85px">66</div>
<div class="m" style="left:305px;top:482.85px">floatingActionButton: <span class="f">FloatingActionButton</span>(onPressed: () {</div>
<div class="ln" style="top:493.85px">67</div>
<div class="m" style="left:313px;top:493.85px">addTask();</div>
<div class="a" style="left:401px;top:183.0px;width:12.500px;height:0;border-bottom:1px dotted #4c7551"></div>
<div class="a" style="left:293px;top:230.85px;width:1px;height:9px;background:#ced0d6"></div>
<svg style="left:264px;top:264.35px" width="8" height="8" viewBox="0 0 8 8"><circle cx="3.500" cy="4.300" r="2.600" fill="#3d68cc"/><path d="M3.500 5.600V3M2.300 4L3.500 2.800L4.700 4" stroke="#1e1f22" stroke-width="0.700" fill="none"/><path d="M6.200 0.500V2.800M5.300 1.300L6.200 0.400L7.100 1.300" stroke="#e0565b" stroke-width="0.700" fill="none"/></svg>
<svg style="left:664px;top:66.500px" width="7" height="7" viewBox="0 0 7 7"><path d="M3.500 0.400L6.800 6.400H0.200Z" fill="#d6ae58"/><path d="M3.500 2.400V4.400M3.500 5.200V5.700" stroke="#1e1f22" stroke-width="0.800"/></svg>
<div class="t" style="left:671.500px;top:64.500px;font-size:7px;color:#b4b8bf">1</div>
<svg style="left:678px;top:66.500px" width="8" height="7" viewBox="0 0 8 7"><path d="M1 3.200L3 5.200L7.200 0.600" fill="none" stroke="#5fad65" stroke-width="1"/><path d="M0.500 6.600H7" stroke="#5fad65" stroke-width="0.700"/></svg>
<div class="t" style="left:687px;top:64.500px;font-size:7px;color:#b4b8bf">1</div>
<svg style="left:694.500px;top:69px" width="5" height="3" viewBox="0 0 5 3"><path d="M0.400 2.600L2.500 0.500L4.600 2.600" fill="none" stroke="#9da0a8" stroke-width="0.800"/></svg>
<svg style="left:705px;top:69px" width="5" height="3" viewBox="0 0 5 3"><path d="M0.400 0.400L2.500 2.500L4.600 0.400" fill="none" stroke="#9da0a8" stroke-width="0.800"/></svg>
<div class="a" style="left:709px;top:227px;width:4px;height:219.500px;background:#46484c;border-radius:1px"></div>
<div class="a" style="left:714px;top:63px;width:223px;height:1px;background:#1e1f22"></div>
<div class="a" style="left:714px;top:81px;width:223px;height:1px;background:#1e1f22"></div>
<div class="t" style="left:720px;top:48px;font-size:7px;color:#dfe1e5;font-weight:bold;letter-spacing:-0.300px">Running Devices</div>
<div class="a" style="left:788px;top:50.200px;width:3.600px;height:6.400px;border:0.800px solid #ced0d6;border-radius:0.800px"></div>
<div class="a" style="left:792px;top:55.500px;width:1.800px;height:1.800px;border-radius:50%;background:#5fad65"></div>
<div class="t" style="left:796px;top:48px;font-size:6.700px;color:#dfe1e5">OPPO CPH2239 API 30</div>
<div class="a" style="left:780.500px;top:62px;width:95px;height:1.500px;background:#6f737a"></div>
<svg style="left:874px;top:51.500px" width="3" height="5" viewBox="0 0 3 5"><path d="M0.400 0.400L2.500 2.500L0.400 4.600" fill="none" stroke="#6f737a" stroke-width="0.800"/></svg>
<svg style="left:878px;top:50px" width="7" height="7" viewBox="0 0 7 7"><path d="M3.500 0.200V6.800M0.200 3.500H6.800" stroke="#ced0d6" stroke-width="0.900"/></svg>
<svg style="left:897.500px;top:50px" width="7" height="7" viewBox="0 0 7 7"><rect x="0.500" y="0.500" width="6" height="6" rx="0.600" fill="none" stroke="#ced0d6" stroke-width="0.900"/><rect x="0.500" y="0.500" width="6" height="2" fill="#ced0d6"/></svg>
<div class="a" style="left:913.500px;top:50.8px;width:1.200px;height:1.200px;background:#9da0a8;border-radius:50%"></div>
<div class="a" style="left:913.500px;top:53.3px;width:1.200px;height:1.200px;background:#9da0a8;border-radius:50%"></div>
<div class="a" style="left:913.500px;top:55.8px;width:1.200px;height:1.200px;background:#9da0a8;border-radius:50%"></div>
<div class="a" style="left:923.500px;top:53px;width:6.500px;height:1px;background:#ced0d6"></div>
<svg style="left:720.1px;top:69px" width="8" height="8" viewBox="0 0 8 8" fill="none" stroke="#c3c6cc" stroke-width="0.800" stroke-linejoin="round" stroke-linecap="round"><path d="M1.200 2.400A3 3 0 1 0 6.800 2.400M1.200 2.400A3 3 0 0 1 6.800 2.400"/><path d="M4 0.800V3.800"/></svg>
<svg style="left:732.6px;top:69px" width="8" height="8" viewBox="0 0 8 8" fill="none" stroke="#c3c6cc" stroke-width="0.800" stroke-linejoin="round" stroke-linecap="round"><path d="M0.600 3H2L4 1.200V6.800L2 5H0.600Z"/><path d="M5.400 2.800V5.200M6.800 1.800V6.200"/></svg>
<svg style="left:745.6px;top:69px" width="8" height="8" viewBox="0 0 8 8" fill="none" stroke="#c3c6cc" stroke-width="0.800" stroke-linejoin="round" stroke-linecap="round"><path d="M0.600 3H2L4 1.200V6.800L2 5H0.600Z"/><path d="M5.600 2.800V5.200"/></svg>
<div class="a" style="left:758px;top:67px;width:1px;height:11px;background:#43454a"></div>
<svg style="left:762.6px;top:69px" width="8" height="8" viewBox="0 0 8 8" fill="none" stroke="#c3c6cc" stroke-width="0.800" stroke-linejoin="round" stroke-linecap="round"><rect x="0.600" y="0.500" width="3.600" height="7" rx="0.500"/><path d="M5.400 1Q7.600 4 5.400 7M5.400 1L6.600 1.200M5.400 1L5.200 2.200" stroke="#3d8ee8"/></svg>
<svg style="left:775.6px;top:69px" width="8" height="8" viewBox="0 0 8 8" fill="none" stroke="#c3c6cc" stroke-width="0.800" stroke-linejoin="round" stroke-linecap="round"><rect x="3.800" y="0.500" width="3.600" height="7" rx="0.500"/><path d="M2.600 1Q0.400 4 2.600 7M2.600 1L1.400 1.200M2.600 1L2.800 2.200" stroke="#3d8ee8"/></svg>
<div class="a" style="left:787px;top:67px;width:1px;height:11px;background:#43454a"></div>
<svg style="left:792.6px;top:69px" width="8" height="8" viewBox="0 0 8 8" fill="none" stroke="#c3c6cc" stroke-width="0.800" stroke-linejoin="round" stroke-linecap="round"><path d="M5.200 1.600V6.400L1.800 4Z"/></svg>
<svg style="left:804.6px;top:69px" width="8" height="8" viewBox="0 0 8 8" fill="none" stroke="#c3c6cc" stroke-width="0.800" stroke-linejoin="round" stroke-linecap="round"><ellipse cx="4" cy="4" rx="2.800" ry="2.300"/></svg>
<svg style="left:818.1px;top:69px" width="8" height="8" viewBox="0 0 8 8" fill="none" stroke="#c3c6cc" stroke-width="0.800" stroke-linejoin="round" stroke-linecap="round"><rect x="2.400" y="1.600" width="3.200" height="4.800" rx="0.400"/></svg>
<div class="a" style="left:830px;top:67px;width:1px;height:11px;background:#43454a"></div>
<svg style="left:833.6px;top:69px" width="9" height="8" viewBox="0 0 9 8" fill="none" stroke="#c3c6cc" stroke-width="0.800" stroke-linejoin="round" stroke-linecap="round"><path d="M0.800 2.400H2.400L3.200 1.200H5.800L6.600 2.400H8.200V7H0.800Z"/><circle cx="4.500" cy="4.600" r="1.400"/></svg>
<svg style="left:846.6px;top:69px" width="9" height="8" viewBox="0 0 9 8" fill="none" stroke="#4e5157" stroke-width="0.800" stroke-linejoin="round" stroke-linecap="round"><rect x="0.600" y="1.800" width="5.400" height="4.600" rx="0.500"/><path d="M6 3.400L8.200 2.200V6L6 4.800"/></svg>
<div class="a" style="left:859px;top:67px;width:1px;height:11px;background:#43454a"></div>
<svg style="left:864.6px;top:69px" width="9" height="8" viewBox="0 0 9 8" fill="none" stroke="#c3c6cc" stroke-width="0.800" stroke-linejoin="round" stroke-linecap="round"><rect x="0.600" y="1" width="6.600" height="4.600" rx="0.500"/><rect x="4.600" y="4" width="3.800" height="3.600" rx="0.500" fill="#2b2d30"/><path d="M1.800 2.600H4"/></svg>
<svg style="left:923.1px;top:69px" width="9" height="8" viewBox="0 0 9 8" fill="none" stroke="#c3c6cc" stroke-width="0.800" stroke-linejoin="round" stroke-linecap="round"><rect x="0.600" y="0.800" width="5.600" height="5" rx="0.500"/><path d="M4.400 4L7.600 7.400M4.400 4V6.400M4.400 4H6.800"/></svg>
<div class="a" style="left:730px;top:82px;width:190px;height:399px;background:#fef7ff"></div>
<div class="a" style="left:730px;top:82px;width:190px;height:18.500px;background:#b2adb3"></div>
<div class="a" style="left:730px;top:480.500px;width:190px;height:22px;background:#000"></div>
<div class="a" style="left:730px;top:502.500px;width:190px;height:1px;background:#3a1a46"></div>
<div class="t" style="left:757.500px;top:87.500px;font-size:6.600px;color:#fff">2:27</div>
<div class="a" style="left:775.700px;top:90.500px;width:6px;height:6px;border-radius:50%;background:#fff"></div>
<div class="t" style="left:777.200px;top:87.700px;font-size:4.500px;font-weight:bold;color:#b2adb3">F</div>
<svg style="left:858.500px;top:90px;opacity:0.850" width="48" height="7" preserveAspectRatio="none" viewBox="0 0 44 7"><circle cx="3" cy="3.800" r="2.300" fill="none" stroke="#fff" stroke-width="0.800"/><path d="M3 2.600V3.900H4M1 1L1.800 0.400M5 1L4.200 0.400" stroke="#fff" stroke-width="0.600" fill="none"/><path d="M8.500 2.200Q12 -0.800 15.500 2.200L12 6.400Z" fill="#fff"/><path d="M19 6.400H20V5H19ZM20.800 6.400H21.800V3.600H20.800ZM22.600 6.400H23.600V2.200H22.600ZM24.400 6.400H25.400V0.800H24.400Z" fill="#fff"/><path d="M28 6.400H29V5H28ZM29.800 6.400H30.800V3.600H29.800ZM31.600 6.400H32.600V2.200H31.600ZM33.400 6.400H34.400V0.800H33.400Z" fill="#fff"/><rect x="36.500" y="1.400" width="6.500" height="4.600" rx="1" fill="none" stroke="#fff" stroke-width="0.800"/><rect x="37.500" y="2.400" width="2.600" height="2.600" fill="#e8d44d"/></svg>
<div class="a" style="left:730px;top:82px;width:1px;height:421px;background:#2b2d30;opacity:0.500"></div>
<div class="a" style="left:920px;top:82px;width:1px;height:421px;background:#fef7ff;opacity:0.600"></div>
<div class="a" style="left:920px;top:82px;width:1px;height:18.500px;background:#aaa5ab;opacity:0.600"></div>
<div class="a" style="left:920px;top:480.500px;width:1px;height:22px;background:#000;opacity:0.600"></div>
<div class="ar" style="left:739px;top:109.89999999999999px;width:46px;text-align:left">مهمة جديدة</div>
<svg style="left:877px;top:105px" width="30" height="20" viewBox="0 0 30 20"><rect x="1.750" y="2.75" width="25.700" height="15.100" rx="7.550" fill="#e6e0e9" stroke="#726d77" stroke-width="1.100"/><circle cx="9.200" cy="10.30" r="4.200" fill="#79747e"/></svg>
<div class="ar" style="left:739px;top:139.45px;width:46px;text-align:left">مهمة جديدة</div>
<svg style="left:877px;top:134px" width="30" height="20" viewBox="0 0 30 20"><rect x="1.750" y="3.30" width="25.700" height="15.100" rx="7.550" fill="#e6e0e9" stroke="#726d77" stroke-width="1.100"/><circle cx="9.200" cy="10.85" r="4.200" fill="#79747e"/></svg>
<div class="ar" style="left:739px;top:169.0px;width:31px;text-align:left">اي كلام</div>
<svg style="left:877px;top:164px" width="30" height="20" viewBox="0 0 30 20"><rect x="1.750" y="2.85" width="25.700" height="15.100" rx="7.550" fill="#e6e0e9" stroke="#726d77" stroke-width="1.100"/><circle cx="9.200" cy="10.40" r="4.200" fill="#79747e"/></svg>
<div class="ar" style="left:739px;top:198.54999999999998px;width:31px;text-align:left">اي كلام</div>
<svg style="left:877px;top:193px" width="30" height="20" viewBox="0 0 30 20"><rect x="1.750" y="3.40" width="25.700" height="15.100" rx="7.550" fill="#e6e0e9" stroke="#726d77" stroke-width="1.100"/><circle cx="9.200" cy="10.95" r="4.200" fill="#79747e"/></svg>
<div class="ar" style="left:739px;top:228.1px;width:31px;text-align:left">اي كلام</div>
<svg style="left:877px;top:223px" width="30" height="20" viewBox="0 0 30 20"><rect x="1.750" y="2.95" width="25.700" height="15.100" rx="7.550" fill="#e6e0e9" stroke="#726d77" stroke-width="1.100"/><circle cx="9.200" cy="10.50" r="4.200" fill="#79747e"/></svg>
<div class="ar" style="left:739px;top:257.65000000000003px;width:31px;text-align:left">اي كلام</div>
<svg style="left:877px;top:253px" width="30" height="20" viewBox="0 0 30 20"><rect x="1.750" y="2.50" width="25.700" height="15.100" rx="7.550" fill="#e6e0e9" stroke="#726d77" stroke-width="1.100"/><circle cx="9.200" cy="10.05" r="4.200" fill="#79747e"/></svg>
<div class="ar" style="left:739px;top:287.20000000000005px;width:31px;text-align:left">اي كلام</div>
<svg style="left:877px;top:282px" width="30" height="20" viewBox="0 0 30 20"><rect x="1.750" y="3.05" width="25.700" height="15.100" rx="7.550" fill="#e6e0e9" stroke="#726d77" stroke-width="1.100"/><circle cx="9.200" cy="10.60" r="4.200" fill="#79747e"/></svg>
<div class="ar" style="left:739px;top:316.75px;width:31px;text-align:left">اي كلام</div>
<svg style="left:877px;top:312px" width="30" height="20" viewBox="0 0 30 20"><rect x="1.750" y="2.60" width="25.700" height="15.100" rx="7.550" fill="#e6e0e9" stroke="#726d77" stroke-width="1.100"/><circle cx="9.200" cy="10.15" r="4.200" fill="#79747e"/></svg>
<div class="ar" style="left:739px;top:346.3px;width:31px;text-align:left">اي كلام</div>
<svg style="left:877px;top:341px" width="30" height="20" viewBox="0 0 30 20"><rect x="1.750" y="3.15" width="25.700" height="15.100" rx="7.550" fill="#e6e0e9" stroke="#726d77" stroke-width="1.100"/><circle cx="9.200" cy="10.70" r="4.200" fill="#79747e"/></svg>
<div class="ar" style="left:739px;top:375.85px;width:31px;text-align:left">اي كلام</div>
<svg style="left:877px;top:371px" width="30" height="20" viewBox="0 0 30 20"><rect x="1.750" y="2.70" width="25.700" height="15.100" rx="7.550" fill="#e6e0e9" stroke="#726d77" stroke-width="1.100"/><circle cx="9.200" cy="10.25" r="4.200" fill="#79747e"/></svg>
<div class="a" style="left:882.500px;top:442.500px;width:30px;height:30px;border-radius:8.500px;background:#eaddff;box-shadow:0 1.500px 2.500px rgba(0,0,0,0.280)"></div>
<div class="a" style="left:915px;top:439px;width:13.500px;height:54px;border-radius:2px;background:#2b2d30;border:1px solid #393b40"></div>
<svg style="left:918px;top:443px" width="7" height="7" viewBox="0 0 7 7"><path d="M3.500 0.300V6.700M0.300 3.500H6.700" stroke="#ced0d6" stroke-width="0.800"/></svg>
<div class="a" style="left:918.500px;top:459.500px;width:6px;height:1px;background:#4e5157"></div>
<div class="t" style="left:918px;top:467px;font-size:5px;font-weight:bold;color:#ced0d6">1:1</div>
<svg style="left:918px;top:482px" width="7" height="7" viewBox="0 0 7 7"><rect x="0.500" y="0.800" width="6" height="5.400" rx="0.600" fill="none" stroke="#4e5157" stroke-width="0.800"/><path d="M1.800 4.800L3 3.400L4 4.200L5.200 2.400" stroke="#4e5157" stroke-width="0.600" fill="none"/></svg>
<svg style="left:776.300px;top:488.300px" width="8" height="8" preserveAspectRatio="none" viewBox="0 0 9 8"><path d="M0.500 1.500H8.500M0.500 4H8.500M0.500 6.500H8.500" stroke="#4a4a4a" stroke-width="0.800"/></svg>
<div class="a" style="left:821.500px;top:488.800px;width:7px;height:7px;border:0.900px solid #4a4a4a;border-radius:1.500px"></div>
<svg style="left:866.800px;top:488.300px" width="8" height="8" viewBox="0 0 8 8"><path d="M6.500 0.800V7.200L1 4Z" fill="none" stroke="#4a4a4a" stroke-width="0.900" stroke-linejoin="round"/></svg>
<svg style="left:831.500px;top:322px" width="7" height="10" viewBox="0 0 7 10"><path d="M0.500 0.500V8L2.300 6.400L3.600 9.300L4.800 8.800L3.500 6H6Z" fill="#fef7ff" stroke="#3a3a3a" stroke-width="0.700" stroke-linejoin="round"/></svg>
<svg style="left:943px;top:48px" width="10" height="10" viewBox="0 0 10 10" fill="none" stroke="#c3c6cc" stroke-width="0.900" stroke-linejoin="round" stroke-linecap="round"><path d="M1.600 7.400H8.400L7.400 6V4Q7.400 1.400 5 1.400Q2.600 1.400 2.600 4V6Z"/><path d="M4 8.800H6"/><circle cx="8" cy="1.600" r="1.500" fill="#e0565b" stroke="none"/></svg>
<svg style="left:943px;top:68.5px" width="10" height="10" viewBox="0 0 10 10" fill="none" stroke="#c3c6cc" stroke-width="0.900" stroke-linejoin="round" stroke-linecap="round"><circle cx="5" cy="5" r="4"/><path d="M3 5Q3 3.200 5 3.200Q7 3.200 7 5Q7 6.600 5.200 6.600Q4.200 6.600 4.200 5.600Q4.200 4.800 5 4.800"/></svg>
<svg style="left:943px;top:88.5px" width="10" height="10" viewBox="0 0 10 10" fill="none" stroke="#c3c6cc" stroke-width="0.900" stroke-linejoin="round" stroke-linecap="round"><ellipse cx="5" cy="2.200" rx="3.600" ry="1.400"/><path d="M1.400 2.200V7.800Q1.400 9.200 5 9.200Q8.600 9.200 8.600 7.800V2.200M1.400 5Q1.400 6.400 5 6.400Q8.600 6.400 8.600 5"/></svg>
<svg style="left:943px;top:108.5px" width="10" height="10" viewBox="0 0 10 10" fill="none" stroke="#c3c6cc" stroke-width="0.900" stroke-linejoin="round" stroke-linecap="round"><path d="M5 0.800L8.800 3V7L5 9.200L1.200 7V3Z"/><path d="M5 3V5.200L6.600 6"/></svg>
<svg style="left:943px;top:128.5px" width="10" height="10" viewBox="0 0 10 10" fill="none" stroke="#c3c6cc" stroke-width="0.900" stroke-linejoin="round" stroke-linecap="round"><rect x="1.400" y="0.800" width="5.400" height="8.400" rx="0.800"/><path d="M5 7H9M7 5.400L9 7L7 8.600" /></svg>
<svg style="left:943px;top:148.5px" width="10" height="10" viewBox="0 0 10 10" fill="none" stroke="#c3c6cc" stroke-width="0.900" stroke-linejoin="round" stroke-linecap="round"><path d="M0.800 3V0.800H3M7 0.800H9.200V3M9.200 7V9.200H7M3 9.200H0.800V7"/><circle cx="5" cy="4" r="1.400"/><path d="M2.600 8Q2.600 6.200 5 6.200Q7.400 6.200 7.400 8"/></svg>
<svg style="left:943px;top:168.5px" width="10" height="10" viewBox="0 0 10 10" fill="none" stroke="#c3c6cc" stroke-width="0.900" stroke-linejoin="round" stroke-linecap="round"><path d="M6.400 1.200L2.400 5L6.400 8.800M8.400 3.600L7 5L8.400 6.400" stroke="#4672cf" stroke-width="1.250"/></svg>
<svg style="left:943px;top:188.5px" width="10" height="10" viewBox="0 0 10 10" fill="none" stroke="#c3c6cc" stroke-width="0.900" stroke-linejoin="round" stroke-linecap="round"><path d="M6.400 1.200L2.400 5L6.400 8.800M8.400 3.600L7 5L8.400 6.400" stroke="#4672cf" stroke-width="1.250"/></svg>
<div class="a" style="left:940.500px;top:211.500px;width:15px;height:15px;border-radius:2.500px;background:#43454a"></div>
<svg style="left:943px;top:214px" width="10" height="10" viewBox="0 0 10 10" fill="none" stroke="#c3c6cc" stroke-width="0.900" stroke-linejoin="round" stroke-linecap="round"><rect x="1" y="1.600" width="7.400" height="7" rx="0.800"/><path d="M3 4.200H6.400M3 6.200H6.400"/><circle cx="8.200" cy="1.800" r="1.500" fill="#5fad65" stroke="none"/></svg>
<svg style="left:943px;top:234.5px" width="10" height="10" viewBox="0 0 10 10" fill="none" stroke="#c3c6cc" stroke-width="0.900" stroke-linejoin="round" stroke-linecap="round"><rect x="1" y="0.800" width="5.400" height="8" rx="0.800"/><circle cx="6.800" cy="6.600" r="1.800" fill="#2b2d30"/><path d="M8 8L9.400 9.400"/></svg>
<div class="a" style="left:5px;top:509px;width:4px;height:5px;border:0.900px solid #4a78d6;border-radius:1px"></div>
<div class="t" style="left:10.500px;top:506px;font-size:7.200px;color:#b4b8bf">hive_test</div>
<svg style="left:43px;top:508.500px" width="3" height="5" viewBox="0 0 3 5"><path d="M0.400 0.400L2.500 2.500L0.400 4.600" fill="none" stroke="#9da0a8" stroke-width="0.800"/></svg>
<div class="t" style="left:51.500px;top:506px;font-size:7.200px;color:#b4b8bf">lib</div>
<svg style="left:62.500px;top:508.500px" width="3" height="5" viewBox="0 0 3 5"><path d="M0.400 0.400L2.500 2.500L0.400 4.600" fill="none" stroke="#9da0a8" stroke-width="0.800"/></svg>
<svg style="left:71.500px;top:507.500px" width="6.800" height="7.600" viewBox="0 0 8 8" preserveAspectRatio="none"><path d="M2.300 0.300H5.200L7.700 2.800V5.800L5.800 7.700H2.800L0.300 5.200V2.300Z" fill="#2fb4f3"/><path d="M0.300 2.600L1.500 1.100L7.300 4.600L7.700 5.800L6.800 6.800L0.300 3.800Z" fill="#0f5ea6"/><path d="M2.300 0.300H5.200L7.700 2.800V4.300L1.700 0.900Z" fill="#3fc0f7"/></svg>
<div class="t" style="left:80.500px;top:506px;font-size:6.900px;color:#b4b8bf">main.dart</div>
<div class="t" style="left:766px;top:506px;font-size:7px;color:#b4b8bf">43:4</div>
<div class="t" style="left:788px;top:506px;font-size:6.300px;color:#b4b8bf">CRLF</div>
<div class="t" style="left:812px;top:506px;font-size:7px;color:#b4b8bf">UTF-8</div>
<svg style="left:840px;top:507.500px" width="6" height="7" viewBox="0 0 6 7"><path d="M0.600 0.600L5.400 3.500L0.600 6.400Z" fill="none" stroke="#5fad65" stroke-width="0.900" stroke-linejoin="round"/></svg>
<div class="t" style="left:847.500px;top:506px;font-size:7px;color:#b4b8bf">Amazon Q</div>
<div class="t" style="left:889px;top:506px;font-size:7px;color:#b4b8bf">2 spaces</div>
<svg style="left:925.500px;top:507px" width="8" height="8" viewBox="0 0 8 8"><rect x="0.800" y="3.400" width="5" height="4" rx="0.600" fill="none" stroke="#b4b8bf" stroke-width="0.800"/><path d="M4.600 3.400V2Q4.600 0.600 6 0.600Q7.400 0.600 7.400 2" fill="none" stroke="#b4b8bf" stroke-width="0.800"/></svg>
<svg style="left:941px;top:507px" width="8" height="8" viewBox="0 0 8 8"><circle cx="4" cy="4" r="3.400" fill="none" stroke="#b4b8bf" stroke-width="0.800"/><path d="M4 2.200V4.600M4 5.600V6" stroke="#b4b8bf" stroke-width="0.900"/></svg>
<div class="a" style="left:0;top:520px;width:958px;height:4px;background:#1b1b1b"></div>
<div class="a" style="left:351px;top:522.500px;width:100px;height:2px;background:#3c3c3c;border-radius:1px"></div>
<div class="a" style="left:613px;top:521.500px;width:19px;height:3px;background:#303030;border-radius:1px 1px 0 0"></div>
<div class="a" style="left:604px;top:523px;width:2px;height:1px;background:#a01818"></div>
</div></body></html>
